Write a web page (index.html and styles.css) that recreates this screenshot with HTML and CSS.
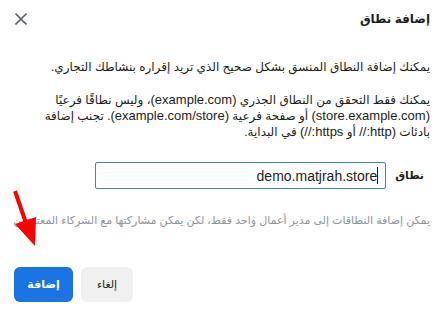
FILE: index.html
```html
<!DOCTYPE html>
<html lang="ar" dir="rtl">
<head>
<meta charset="utf-8">
<link rel="stylesheet" href="styles.css">
</head>
<body>
<div class="dialog">
  <header class="head">
    <h1 class="title">إضافة نطاق</h1>
    <button class="close" aria-label="إغلاق">
      <svg width="12" height="12" viewBox="0 0 12 12"><path d="M0.5 0.5 L11.5 11.5 M11.5 0.5 L0.5 11.5" stroke="#606770" stroke-width="1.6" fill="none"/></svg>
    </button>
  </header>
  <div class="body">
    <p class="p1">يمكنك إضافة النطاق المنسق بشكل صحيح الذي تريد إقراره بنشاطك التجاري.</p>
    <p class="p2">يمكنك فقط التحقق من النطاق الجذري <span class="lat">(example.com)</span>، وليس نطاقًا فرعيًا <span class="lat">(store.example.com)</span> أو صفحة فرعية <span class="lat">(example.com/store)</span>. تجنب إضافة بادئات <span class="lat">(http://</span> أو <span class="lat">https://)</span> في البداية.</p>
    <div class="field">
      <label class="label">نطاق</label>
      <div class="input"><span class="caret"></span><span class="value">demo.matjrah.store</span></div>
    </div>
    <p class="hint">يمكن إضافة النطاقات إلى مدير أعمال واحد فقط، لكن يمكن مشاركتها مع الشركاء المعتمدين</p>
  </div>
  <footer class="actions">
    <button class="btn cancel">إلغاء</button>
    <button class="btn add">إضافة</button>
  </footer>
  <svg class="arrow" width="40" height="70" viewBox="0 0 40 70">
    <path d="M2 3 L14 38" stroke="#ff0000" stroke-width="4" stroke-linecap="butt" fill="none"/>
    <polygon points="2,36 23,29 22,58" fill="#ff0000"/>
  </svg>
</div>
</body>
</html>
```
FILE: styles.css
```css
* { box-sizing: border-box; }
html, body { margin: 0; padding: 0; background: #ffffff; }
body {
  font-family: "Liberation Sans", "DejaVu Sans", sans-serif;
  color: #1c1e21;
  font-size: 12px;
  width: 438px;
  height: 314px;
  overflow: hidden;
}
.dialog {
  position: relative;
  padding: 0 8px 0 14px;
}
.head {
  display: flex;
  align-items: center;
  justify-content: space-between;
  height: 36px;
  padding-top: 2px;
}
.title {
  margin: 0;
  font-size: 12px;
  font-weight: bold;
  line-height: 20px;
  color: #1c1e21;
}
.close {
  border: 0;
  background: none;
  padding: 0;
  margin-left: -1px;
  width: 16px;
  height: 16px;
  display: flex;
  align-items: center;
  justify-content: center;
}
.body { padding-top: 23px; }
.p1, .p2, .hint {
  margin: 0;
  line-height: 16px;
  font-size: 12px;
}
.p2 { margin-top: 17px; }
.lat { font-size: 13px; line-height: 1; }
.field {
  display: flex;
  align-items: center;
  gap: 9px;
  margin-top: 22px;
  padding-right: 6px;
}
.label {
  font-weight: bold;
  font-size: 11px;
  color: #1c1e21;
}
.input {
  width: 291px;
  height: 27px;
  border: 1px solid #3b7de9;
  border-radius: 2px;
  display: flex;
  align-items: center;
  padding-right: 7px;
  font-size: 14px;
  color: #1c1e21;
  direction: ltr;
  justify-content: flex-end;
}
.input .value { order: 1; }
.input .caret {
  order: 2;
  width: 1px;
  height: 17px;
  background: #1c1e21;
}
.hint {
  margin-top: 23px;
  font-size: 11px;
  color: #90949c;
  white-space: nowrap;
}
.actions {
  display: flex;
  justify-content: flex-end;
  gap: 8px;
  margin-top: 39px;
}
.btn {
  height: 35px;
  border: 0;
  border-radius: 6px;
  font-family: inherit;
  font-size: 11px;
  font-weight: bold;
  padding: 0;
}
.cancel {
  width: 52px;
  background: #f0f0f0;
  color: #1c1e21;
  font-weight: normal;
}
.add {
  width: 59px;
  background: #1b74e4;
  color: #ffffff;
}
.arrow {
  position: absolute;
  left: 13px;
  top: 188px;
}
```
